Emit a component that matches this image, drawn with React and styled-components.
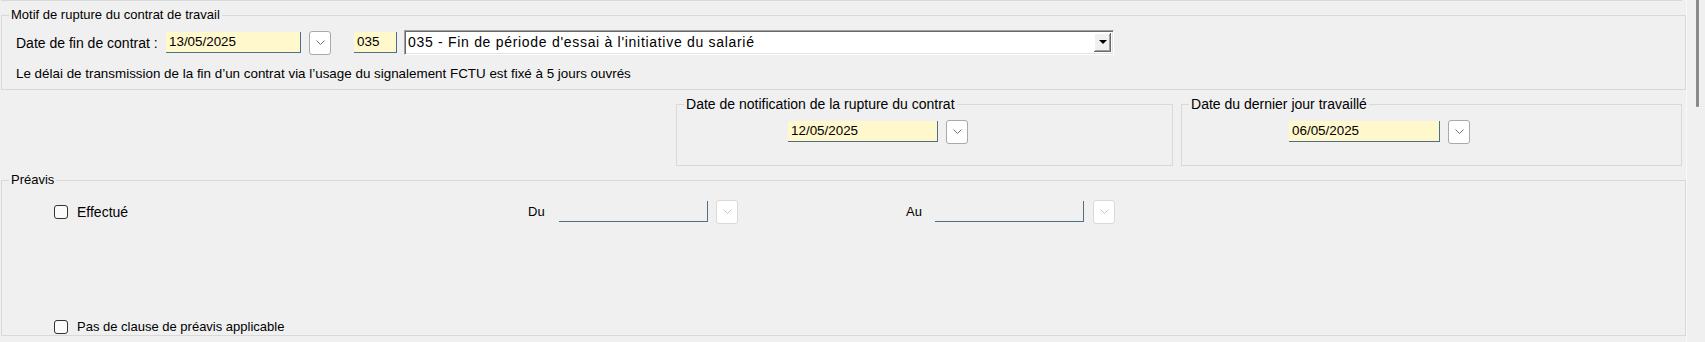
import React from "react";
import styled, { createGlobalStyle } from "styled-components";

const GlobalStyle = createGlobalStyle`
  html, body {
    margin: 0;
    padding: 0;
    background: #f0f0f0;
  }
  body {
    width: 1705px;
    height: 342px;
    overflow: hidden;
    font-family: "Liberation Sans", Arial, sans-serif;
    font-size: 13px;
    color: #000;
  }
`;

const Window = styled.div`
  display: flex;
  width: 1705px;
  height: 342px;
  overflow: hidden;
`;

const Content = styled.div`
  width: 1686px;
  padding-left: 1px;
  display: flex;
  flex-direction: column;
`;

const TopRule = styled.div`
  height: 1px;
  margin-right: 4px;
  background: #d9d9d9;
`;

const Group = styled.fieldset`
  box-sizing: border-box;
  margin: ${(p) => p.$mt ?? 6}px 0 0 0;
  padding: 0 7px ${(p) => p.$pb ?? 0}px;
  border: 1px solid #d9d9d9;
  min-width: 0;
  width: ${(p) => (p.$w ? `${p.$w}px` : "auto")};
  flex-shrink: 0;
`;

const Legend = styled.legend`
  padding: 0 2px;
  line-height: 16px;
  font-size: ${(p) => p.$size || 13}px;
`;

const Row = styled.div`
  display: flex;
  align-items: center;
  height: ${(p) => p.$h || 16}px;
  margin-top: ${(p) => p.$mt || 0}px;
  padding-left: ${(p) => p.$pl || 0}px;
`;

const Label = styled.span`
  display: inline-block;
  width: ${(p) => (p.$w ? `${p.$w}px` : "auto")};
  font-size: ${(p) => p.$size || 13}px;
  white-space: nowrap;
  line-height: 16px;
`;

const InfoText = styled.div`
  margin-top: 11px;
  padding-left: 7px;
  font-size: 13.4px;
  line-height: 16px;
  white-space: nowrap;
`;

const DateField = styled.div`
  box-sizing: border-box;
  width: ${(p) => p.$w}px;
  height: 21px;
  margin-right: ${(p) => p.$mr || 0}px;
  padding-left: 3px;
  font-size: 13.4px;
  line-height: 20px;
  background: ${(p) => (p.$disabled ? "transparent" : "#fff8cd")};
  border-right: 1px solid #4f6f86;
  border-bottom: 1px solid #4f6f86;
`;

const DropButton = styled.div`
  box-sizing: border-box;
  width: 22px;
  height: 24px;
  margin-right: ${(p) => p.$mr || 0}px;
  display: flex;
  align-items: center;
  justify-content: center;
  background: #fff;
  border: 1px solid ${(p) => (p.$disabled ? "#dadada" : "#a9a9a9")};
  border-radius: 3px;
  color: ${(p) => (p.$disabled ? "#c4c4c4" : "#707070")};
`;

const Combo = styled.div`
  box-sizing: border-box;
  width: 710px;
  height: 25px;
  display: flex;
  align-items: stretch;
  padding: 2px;
  background: #fff;
  border-top: 1px solid #a0a0a0;
  border-left: 1px solid #a0a0a0;
  border-right: 1px solid #fff;
  border-bottom: 1px solid #fff;
  box-shadow: inset 1px 1px 0 #696969, inset -1px -1px 0 #e3e3e3;
`;

const ComboText = styled.span`
  flex: 1;
  padding-left: 1px;
  font-size: 14px;
  letter-spacing: 0.7px;
  line-height: 19px;
  white-space: nowrap;
`;

const ComboButton = styled.div`
  width: 17px;
  display: flex;
  align-items: center;
  justify-content: center;
  background: #f0f0f0;
  box-shadow: inset -1px -1px 0 #696969, inset 1px 1px 0 #fff,
    inset -2px -2px 0 #a0a0a0;
`;

const Triangle = styled.span`
  width: 0;
  height: 0;
  border-left: 4px solid transparent;
  border-right: 4px solid transparent;
  border-top: 4px solid #000;
  margin-bottom: 1px;
`;

const MiddleRow = styled.div`
  display: flex;
  justify-content: flex-end;
  gap: 8px;
  margin-right: 4px;
`;

const CheckItem = styled.label`
  display: flex;
  align-items: center;
  width: ${(p) => (p.$w ? `${p.$w}px` : "auto")};
  gap: 9px;
  font-size: ${(p) => p.$size || 13}px;
  line-height: 16px;
`;

const CheckBox = styled.span`
  box-sizing: border-box;
  width: 14px;
  height: 14px;
  border: 1px solid #333;
  border-radius: 3px;
  background: #fbfbfb;
`;

const Spacer = styled.div`
  width: ${(p) => p.$w}px;
  flex-shrink: 0;
`;

const Scrollbar = styled.div`
  width: 18px;
  border-left: 1px solid #f8f8f8;
  display: flex;
  justify-content: center;
`;

const Thumb = styled.div`
  width: 3px;
  height: 107px;
  margin-left: 2px;
  background: #8a8a8a;
  border-radius: 0 0 1px 1px;
`;

const Chevron = () => (
  <svg width="9" height="5" viewBox="0 0 9 5">
    <polyline
      points="0.5,0.5 4.5,4.5 8.5,0.5"
      fill="none"
      stroke="currentColor"
      strokeWidth="1"
    />
  </svg>
);

const DateGroup = ({ title, value, width, pad, fieldWidth }) => (
  <Group $w={width} $pb={20}>
    <Legend $size={14}>{title}</Legend>
    <Row $h={27} $mt={6} $pl={pad}>
      <DateField $w={fieldWidth} $mr={8}>
        {value}
      </DateField>
      <DropButton>
        <Chevron />
      </DropButton>
    </Row>
  </Group>
);

const App = () => (
  <Window>
    <GlobalStyle />
    <Content>
      <TopRule />

      <Group $pb={7}>
        <Legend>Motif de rupture du contrat de travail</Legend>
        <Row $h={25} $mt={7} $pl={7}>
          <Label $w={150} $size={14}>
            Date de fin de contrat :
          </Label>
          <DateField $w={135} $mr={8}>
            13/05/2025
          </DateField>
          <DropButton $mr={23}>
            <Chevron />
          </DropButton>
          <DateField $w={43} $mr={7}>
            035
          </DateField>
          <Combo>
            <ComboText>035 - Fin de période d'essai à l'initiative du salarié</ComboText>
            <ComboButton>
              <Triangle />
            </ComboButton>
          </Combo>
        </Row>
        <InfoText>
          Le délai de transmission de la fin d’un contrat via l’usage du signalement FCTU est fixé à 5 jours ouvrés
        </InfoText>
      </Group>

      <MiddleRow>
        <DateGroup
          title="Date de notification de la rupture du contrat"
          value="12/05/2025"
          width={497}
          pad={104}
          fieldWidth={150}
        />
        <DateGroup
          title="Date du dernier jour travaillé"
          value="06/05/2025"
          width={501}
          pad={100}
          fieldWidth={151}
        />
      </MiddleRow>

      <Group $mt={6}>
        <Legend>Préavis</Legend>
        <Row $h={25} $mt={11} $pl={45}>
          <CheckItem $w={474} $size={14}>
            <CheckBox />
            Effectué
          </CheckItem>
          <Label $w={31}>Du</Label>
          <DateField $w={149} $mr={8} $disabled />
          <DropButton $disabled>
            <Chevron />
          </DropButton>
          <Spacer $w={168} />
          <Label $w={29}>Au</Label>
          <DateField $w={149} $mr={9} $disabled />
          <DropButton $disabled>
            <Chevron />
          </DropButton>
        </Row>
        <Row $h={16} $mt={95} $pl={45}>
          <CheckItem>
            <CheckBox />
            Pas de clause de préavis applicable
          </CheckItem>
        </Row>
      </Group>
    </Content>
    <Scrollbar>
      <Thumb />
    </Scrollbar>
  </Window>
);

export default App;
